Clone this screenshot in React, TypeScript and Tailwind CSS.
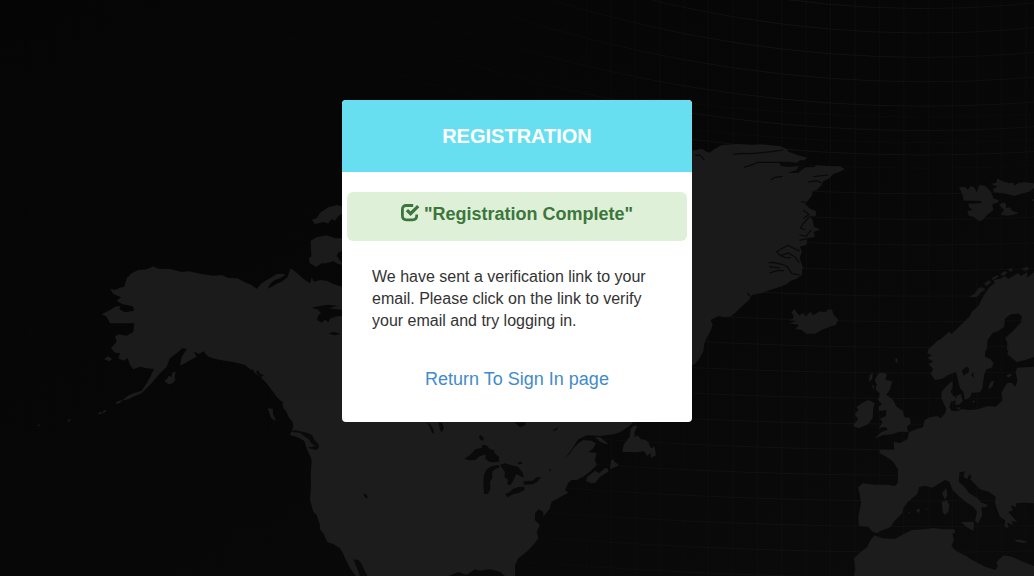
const trace = (y: number, k: number) =>
  Array.from({ length: 24 }, (_, n) => {
    const x = n * 46;
    return `${n ? "L" : "M"}${x},${(y - k * (x - 925) * (x - 925)).toFixed(1)}`;
  }).join("");

const northParallels = Array.from({ length: 7 }, (_, i) => trace(8.6 + i * 24.4, 0.00047 - i * 0.00003));
const southParallels = Array.from({ length: 19 }, (_, i) => trace(117 + i * 25.6, Math.max(0.0001, 0.00025 - i * 0.000015)));

const meridians = Array.from({ length: 42 }, (_, i) => 25.4 + i * 24.4);

function WorldMap() {
  return (
    <svg viewBox="0 0 1034 576" className="absolute inset-0 h-full w-full" aria-hidden="true">
      <defs>
        <linearGradient id="sea" x1="0" y1="0" x2="1" y2="1">
          <stop offset="0" stopColor="#050505" />
          <stop offset=".5" stopColor="#070707" />
          <stop offset="1" stopColor="#0b0b0b" />
        </linearGradient>
        <linearGradient id="fade" x1="0" y1="0" x2="1" y2="0">
          <stop offset=".1" stopColor="#fff" stopOpacity=".1" />
          <stop offset=".5" stopColor="#fff" stopOpacity=".25" />
          <stop offset=".75" stopColor="#fff" />
          <stop offset="1" stopColor="#fff" stopOpacity=".7" />
        </linearGradient>
        <mask id="gridMask" maskUnits="userSpaceOnUse" x="0" y="0" width="1034" height="576">
          <rect width="1034" height="576" fill="url(#fade)" />
        </mask>
      </defs>
      <rect width="1034" height="576" fill="url(#sea)" />
      <g mask="url(#gridMask)" fill="none" stroke="#141414" strokeWidth=".9">
        {northParallels.map((d) => <path key={d} d={d} />)}
        {southParallels.map((d, i) => <path key={d} d={d} strokeOpacity={i < 3 ? 0.45 : 0.9} />)}
        {meridians.map((x) => <path key={x} d={`M${x},0V576`} strokeOpacity=".55" />)}
      </g>

      {/* Alaska and western Canada */}
      <g transform="translate(0 190) scale(.33333)" fill="#1b1b1b">
        <path d="M330,296 345,300 360,293 373,290 380,265 395,250 415,240 440,238 460,229 475,236 510,237 545,246 567,244 600,251 640,257 665,255 685,264 712,265 735,277 755,285 770,296 785,280 800,270 815,262 830,252 850,251 855,256 840,265 825,270 812,280 803,296 815,290 830,281 845,275 862,262 872,235 890,248 910,266 930,280 935,262 942,275 960,270 980,272 1000,282 1030,292V752H950L905,730 880,712 878,696 865,680 858,664 850,655 845,635 830,620 815,600 800,580 780,560 760,545 735,525 710,518 680,513 650,508 625,500 610,484 598,492 582,485 590,500 575,508 555,520 540,527 545,500 560,478 548,474 530,490 510,505 500,530 480,550 455,580 440,595 425,610 400,620 385,628 365,632 382,618 400,610 425,602 440,580 450,562 462,537 440,535 420,530 400,538 390,525 383,505 370,512 355,505 360,490 345,488 333,475 350,455 345,440 355,433 380,437 400,425 403,400 375,400 350,400 330,400 320,380 305,373 330,360 345,350 362,347 358,358 375,367 402,362 400,350 385,346 367,343 350,332 363,322 340,312Z" />
        <path d="M936,90 950,84 960,68 985,52 1010,45 1030,50V70L1015,78 1005,92 995,87 985,100 970,96 945,102ZM932,152 950,142 980,136 1005,145 1030,145V180L1015,188 1010,197 1030,225 1015,222 1000,214 978,220 965,220 948,231 930,220 926,206 934,198ZM312,507 325,499 337,508 327,514ZM493,572 503,565 505,558 515,560 516,548 527,545 524,562 526,570 518,580 505,583ZM345,642 352,634 367,631 360,640ZM290,674 302,664 304,671ZM303,672 312,661 322,661 314,667ZM202,691 213,686 208,696ZM112,707 118,702 119,709ZM156,694 168,694ZM803,654 818,658 820,675 829,692 815,685 810,670Z" />
        <g fill="#080808">
          <path d="M935,353 960,348 985,344 1012,348 985,355 1030,360V378L1010,379 990,386 985,397 975,389 965,398 951,390 955,375 963,371 955,359ZM985,431 1000,425 1022,432 1004,436Z" />
          <path d="M753,536 762,542 760,550ZM768,545 775,541 780,551 792,555 784,560 789,578 801,584 803,599 816,602 823,609 827,628 818,620 810,607 797,600 790,587 778,576 778,561ZM837,641 851,630 846,645Z" />
        </g>
      </g>

      {/* United States and eastern Canada */}
      <g transform="translate(250 400) scale(.33333)" fill="#1c1c1c">
        <path d="M95,0 113,32 116,47 132,73 127,88 120,105 143,112 162,122 172,150 182,172 185,182 182,220 183,260 180,300 190,335 200,346 209,372 211,390 220,400 232,427 250,432 270,445 279,460 285,475 300,505 318,528H596L625,516 650,524 675,508 690,512 720,508 750,515 765,528H795V495L805,475 830,455 850,435 865,415 860,395 870,375 855,360 855,340 865,328 880,335 880,350 900,325 905,305 930,292 955,278 945,270 955,248 965,240 980,240 1000,230 1020,215 1035,200 1040,195 1035,180 1040,158 1015,157 1030,145 1038,130 1025,122 1000,120 985,130 970,145 960,160 943,178 960,155 972,138 985,118 1010,106 1050,108 1090,103 1110,97 1135,80 1150,66V0Z" />
        <path d="M54,26 68,26 67,45 75,62 63,53ZM1008,243 1013,229 1036,212 1047,220 1062,206 1073,203 1075,215 1050,230 1037,248 1024,250ZM1083,182 1090,177 1094,186 1108,196 1080,208ZM1117,156 1121,134 1139,110 1142,87 1151,77 1162,77 1154,96 1153,112 1163,106 1173,118 1185,119 1195,125 1202,144 1214,140 1218,166 1203,174 1201,158 1192,168 1182,154 1160,157Z" />
        <path d="M1035,111 1051,112 1074,131 1068,133 1048,124Z" />
        <g fill="#0a0a0a">
          <path d="M120,95 135,90 157,95 174,99 187,106 193,119 205,132 207,143 198,150 172,143 195,138 183,129 177,118 163,109 149,98ZM340,279 350,284 354,295 345,293Z" />
          <path d="M310,478 325,480 333,488 345,514 352,528H330L321,505ZM530,67 541,72 551,90 552,102 545,97 539,80ZM565,66 577,70 582,84 575,97 570,89ZM793,67 828,67 825,76 810,82ZM687,112 690,104 700,111 701,122 691,119Z" />
          <path d="M643,176 660,165 676,148 695,143 698,134 709,136 720,147 732,151 735,161 747,170 747,185 732,187 720,187 706,176 708,163 690,168 676,180 656,181ZM700,245 702,224 711,207 725,199 745,195 749,201 735,208 726,217 728,232 720,245 721,267 714,281 702,282ZM750,195 765,190 805,201 817,217 822,233 811,228 799,222 792,238 781,256 771,251 775,239 763,231 765,216ZM765,282 779,277 788,267 805,261 822,260 824,270 805,279 790,282 774,292ZM820,244 848,242 860,232 873,231 864,244 849,253 822,254ZM803,188 814,185 817,191 805,193Z" />
          <path d="M906,94 923,81 920,90ZM895,209 903,208 901,214ZM861,338 868,332 867,352 874,363 865,360Z" />
        </g>
      </g>

      {/* Greenland and Iceland */}
      <g transform="translate(680 130) scale(.33333)" fill="#1a1a1a">
        <path d="M0,65 47,60 65,56 80,65 88,68 103,58 125,45 175,42 215,44 245,43 300,49 320,56 325,65 350,74 382,83 360,100 375,111 400,112 410,106 440,108 480,109 494,117 483,124 460,132 448,145 430,153 424,166 410,181 397,182 397,195 386,209 375,221 390,236 407,242 409,257 389,259 398,270 402,290 421,299 400,306 405,320 383,325 379,345 360,350 366,365 359,383 368,410 365,435 350,446 332,452 320,463 292,473 270,480 242,490 216,495 205,512 190,525 165,549 150,560 132,562 117,557 92,570 98,585 90,606 80,624 73,640 70,665 56,689 42,705 0,710Z" />
        <path d="M325,571 339,567 341,557 334,547 343,537 357,556 370,549 377,560 391,545 399,556 420,544 437,547 444,538 456,539 462,556 475,569 466,586 450,590 425,600 406,611 379,611 366,600 346,597 357,585 328,580 348,573Z" />
        <path d="M295,95 325,95 352,98 361,90 382,93 384,108 368,118 354,129 322,129 350,120 356,108 326,111 303,108Z" fill="#090909" />
        <g fill="none" stroke="#090909" strokeWidth="3.5">
          <path d="M192,112 218,104 232,97 300,97" />
          <path d="M160,73 187,70 215,71 275,65 310,60M272,150 285,142 308,139M45,76 61,75 73,91M400,140 445,135M384,156 410,152 424,158M363,215 378,216M370,240 387,254 370,265M389,259 370,280 361,294 376,300M359,315 378,319 394,300M358,331 386,325M290,365 307,355 324,346 344,356 359,363M289,365 301,377 325,369 346,382 358,398M300,376 316,383 333,383M266,398 279,397 306,403 322,410 336,431 360,435M268,410 300,414M269,429 293,421 312,422M202,489 210,498" />
        </g>
      </g>

      {/* Svalbard */}
      <g transform="translate(780 160) scale(.33333)" fill="#1a1a1a">
        <path d="M537,82 555,80 563,89 573,78 583,82 590,97 598,75 615,77 633,95 641,116 657,120 653,128 637,132 640,151 622,164 608,180 598,184 581,171 567,168 562,153 579,150 568,143 564,131 605,129 603,123 574,122 551,122 548,105ZM631,71 647,69 653,55 665,63 687,70 700,68 704,77 716,68 735,67 762,70V85L745,96 724,101 703,108 681,102 664,99 641,96 639,86 652,80ZM657,134 671,127 678,132 679,144 690,142 697,153 716,158 700,165 682,167 662,164 672,150Z" />
        {/* Scandinavia */}
        <path d="M445,567 467,550 490,530 507,515 515,522 548,490 570,468 575,455 595,438 605,418 614,402 626,384 644,368 641,360 665,355 674,348 685,357 704,345 715,339 722,348 742,337 741,353 762,337V570H680L682,552 676,533 696,516 708,503 724,486 725,468 716,461 692,463 675,476 672,501 655,513 638,519 623,540 620,570H445Z" fill="#1b1b1b" />
        <path d="M565,410 582,403 596,383 607,382 617,388 602,399 589,412ZM612,371 627,360 634,367 619,378ZM634,355 651,345 657,350 638,360ZM661,343 674,333 683,337 671,348ZM681,329 696,323 696,335ZM724,327 741,320 749,326 737,333ZM755,120 762,116V125Z" />
      </g>

      {/* Europe and North Africa */}
      <g transform="translate(840 340) scale(.33333)" fill="#1c1c1c">
        <path d="M265,30 285,10 295,0H440L437,25 435,50 452,58 461,70 455,83 440,87 433,102 427,145 420,157 395,158 390,172 375,180 370,155 360,145 354,120 348,95 325,105 306,116 285,120 272,102 279,86 266,71 280,65 262,54 276,46 262,40Z" />
        <path d="M500,0H582V52L555,60 530,66 513,52 502,43 507,25Z" />
        <path d="M305,155 320,138 337,123 338,142 332,155 341,170 334,184 328,201 335,213 352,213 367,207 385,210 414,208 443,198 467,200 488,180 484,160 500,130 515,128 526,140 532,122 527,97 531,83 582,80V490L555,488 527,490 529,502 513,496 518,512 504,515 519,532 532,546 514,543 521,555 502,548 506,564 494,561 495,540 480,530 470,505 465,488 467,470 445,455 420,448 402,430 390,418 395,410 388,401 382,418 371,411 374,394 359,397 356,425 373,440 388,460 411,473 423,487 443,495 439,502 424,502 427,525 415,550 405,544 411,515 400,500 377,486 353,465 338,450 328,425 315,420 300,429 277,443 255,437 237,442 232,462 204,485 189,506 187,520 163,544 151,562 120,574 110,580 96,574 85,560 56,557 55,530 63,490 60,465 54,443 68,430 105,434 141,434 164,438 173,430 174,388 158,364 139,350 119,340 119,330 139,329 163,330 161,305 179,310 203,297 207,276 233,266 249,262 254,240 270,232 293,228 301,235 314,222 319,207 311,190 304,173Z" />
        <path d="M42,655 63,635 81,622 92,600 103,586 127,595 165,597 190,583 215,570 252,568 280,564 311,568 342,567 346,577 337,582 342,600 334,619 349,633 378,648 401,662 435,680 467,690 473,679 469,666 491,646 516,650 548,665 582,678V708H42L46,686Z" />
        <path d="M115,100 130,98 141,102 136,120 157,124 149,151 139,164 158,178 170,200 188,212 193,231 210,234 212,250 200,262 205,275 179,275 156,283 130,285 103,296 124,276 143,269 138,261 116,264 128,247 120,236 138,228 139,210 118,213 115,202 126,192 114,180 120,162 106,146 111,135 104,121ZM70,187 85,180 104,189 100,204 98,234 84,253 57,265 39,258 54,237 44,223 55,209 49,201ZM89,105 99,99 96,118 87,127ZM95,135 103,138 101,147ZM330,172 344,167 349,180 335,185ZM350,167 363,162 368,184 355,196 345,193ZM347,203 363,202 356,209ZM396,181 405,184 400,190ZM445,142 453,125 462,121 458,137 448,147ZM499,106 510,101 516,106 504,113ZM306,460 319,443 322,467 315,479ZM305,487 320,480 328,494 325,515 315,526 308,517ZM363,546 400,545 402,553 400,573 380,561ZM228,511 241,505 237,520ZM255,505 263,506 259,510ZM204,517 210,515 207,521ZM524,600 541,599 563,605 551,609 529,605ZM166,57 172,54 173,68 167,66Z" />
        <g fill="#0b0b0b">
          <path d="M366,92 378,80 387,84 387,96 370,107ZM393,105 400,96 401,114ZM562,499 579,496 575,500 561,504Z" />
        </g>
      </g>
    </svg>
  );
}

function CheckIcon() {
  return (
    <svg viewBox="0 0 18 18" className="h-[18px] w-[18px] shrink-0 overflow-visible" fill="none" stroke="#3c763d" aria-hidden="true">
      <path d="M12.2 1.5H5.4Q1.4 1.5 1.4 5.5v6.3q0 4 4 4h6.3q4 0 4-4V10.4" strokeWidth="2.8" />
      <path d="M5.9 6.1 9.6 9.7 17.2 2.1" strokeWidth="3.2" />
    </svg>
  );
}

export default function App() {
  return (
    <main className="relative h-[576px] w-full overflow-hidden bg-[#070707] font-['Liberation_Sans',Arial,sans-serif]">
      <WorldMap />
      <div className="relative flex justify-center pt-[100px]">
        <section className="h-[322px] w-[350px] overflow-hidden rounded bg-white">
          <h1 className="flex h-[72px] items-center justify-center bg-[#68dff0] text-[20px] leading-[22px] font-bold text-white">
            REGISTRATION
          </h1>
          <div className="px-[5px] pt-5">
            <div className="flex h-[49px] items-start justify-center gap-[5px] rounded-md bg-[#dff0d8] pt-3 text-[18px] leading-5 font-bold text-[#3c763d]">
              <CheckIcon />
              <span>"Registration Complete"</span>
            </div>
          </div>
          <p className="px-[30px] pt-[25px] text-[16px] leading-[22px] text-[#333333]">
            We have sent a verification link to your email. Please click on the link to verify your email and try logging in.
          </p>
          <div className="pt-9 text-center text-[18px] leading-[22px]">
            <a href="#" className="text-[#428bca]">Return To Sign In page</a>
          </div>
        </section>
      </div>
    </main>
  );
}
